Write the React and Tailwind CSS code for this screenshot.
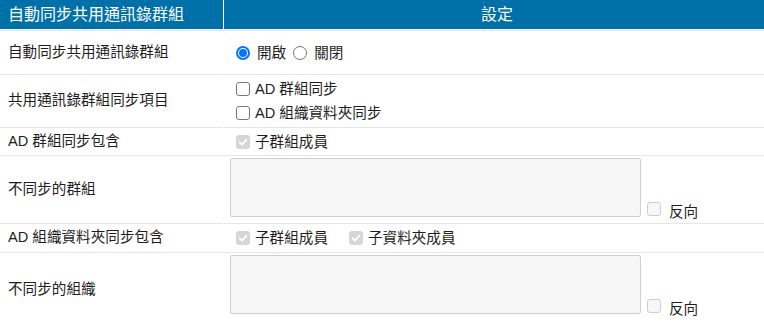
import React from "react";

function Row({ h, label, contentClass = "", children }) {
  return (
    <div className={`grid grid-cols-[223px_1fr] gap-x-px ${h}`}>
      <div className="border-t border-[#e6e6e6] flex items-center pl-[8px]">{label}</div>
      <div className={`border-t border-[#e6e6e6] pl-[6px] ${contentClass}`}>{children}</div>
    </div>
  );
}

function Box({ variant = "off", className = "" }) {
  if (variant === "checkedDisabled") {
    return (
      <span className={`shrink-0 w-[14px] h-[14px] rounded-[3px] bg-[#d6d6d6] flex items-center justify-center ${className}`}>
        <svg width="10" height="10" viewBox="0 0 10 10">
          <path d="M1.6 5.2 L4 7.5 L8.5 2.6" fill="none" stroke="#fff" strokeWidth="1.8" strokeLinecap="round" strokeLinejoin="round" />
        </svg>
      </span>
    );
  }
  if (variant === "disabled") {
    return <span className={`shrink-0 w-[14px] h-[14px] rounded-[3px] border border-[#cdcdcd] bg-[#f7f7f7] ${className}`} />;
  }
  return <span className={`shrink-0 w-[14px] h-[14px] rounded-[3px] border border-[#767676] bg-white ${className}`} />;
}

function Radio({ checked = false, className = "" }) {
  if (checked) {
    return (
      <span className={`shrink-0 w-[14px] h-[14px] rounded-full border-[2px] border-[#0075ff] bg-white flex items-center justify-center ${className}`}>
        <span className="w-[8px] h-[8px] rounded-full bg-[#0075ff]" />
      </span>
    );
  }
  return <span className={`shrink-0 w-[14px] h-[14px] rounded-full border border-[#767676] bg-white ${className}`} />;
}

function Check({ variant = "off", label, className = "" }) {
  return (
    <label className={`flex items-center ${className}`}>
      <Box variant={variant} className="ml-[6px]" />
      <span className="ml-[5px] leading-[20px]">{label}</span>
    </label>
  );
}

function Area() {
  return (
    <div className="flex items-end pt-[2px]">
      <div className="w-[411px] h-[59px] bg-[#f7f7f7] border border-[#cfcfcf] rounded-[2px]" />
      <Box variant="disabled" className="ml-[6px] mb-[1px]" />
      <span className="ml-[8px] leading-[16px] -mb-[3px]">反向</span>
    </div>
  );
}

export default function App() {
  return (
    <div className="w-[764px] h-[326px] overflow-hidden bg-white text-[#1e1e1e] text-[14.6px] font-['Liberation_Sans','Noto_Sans_CJK_TC',sans-serif]">
      <div className="grid grid-cols-[223px_1fr] gap-x-px h-[29px] text-white text-[16px] leading-[29px]">
        <div className="bg-[#0070a8] pl-[8px]">自動同步共用通訊錄群組</div>
        <div className="bg-[#0070a8] text-center pl-[6px]">設定</div>
      </div>
      <div className="mt-px">
        <Row h="h-[44px]" label="自動同步共用通訊錄群組" contentClass="flex items-center">
          <label className="flex items-center">
            <Radio checked className="ml-[6px]" />
            <span className="ml-[7px] leading-[20px]">開啟</span>
          </label>
          <label className="flex items-center ml-[7px]">
            <Radio />
            <span className="ml-[7px] leading-[20px]">關閉</span>
          </label>
        </Row>
        <Row h="h-[53px]" label="共用通訊錄群組同步項目" contentClass="flex flex-col justify-center">
          <Check label="AD 群組同步" className="h-[24px]" />
          <Check label="AD 組織資料夾同步" className="h-[24px]" />
        </Row>
        <Row h="h-[28px]" label="AD 群組同步包含" contentClass="flex items-center">
          <Check variant="checkedDisabled" label="子群組成員" />
        </Row>
        <Row h="h-[68px]" label="不同步的群組">
          <Area />
        </Row>
        <Row h="h-[29px]" label="AD 組織資料夾同步包含" contentClass="flex items-center">
          <Check variant="checkedDisabled" label="子群組成員" />
          <Check variant="checkedDisabled" label="子資料夾成員" className="ml-[15px]" />
        </Row>
        <Row h="h-[74px]" label="不同步的組織">
          <Area />
        </Row>
      </div>
    </div>
  );
}
